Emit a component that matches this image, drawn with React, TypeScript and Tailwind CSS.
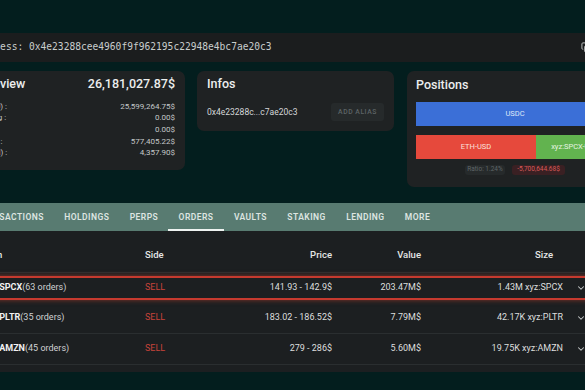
import React from "react";
import { Copy, ChevronDown } from "lucide-react";

const overviewRows = [
  { label: "Spot (U) :", value: "25,599,264.75$" },
  { label: "Lending :", value: "0.00$" },
  { label: "Vault :", value: "0.00$" },
  { label: "Staked :", value: "577,405.22$" },
  { label: "Fee (7d) :", value: "4,357.90$" },
];

const tabs = ["TRANSACTIONS", "HOLDINGS", "PERPS", "ORDERS", "VAULTS", "STAKING", "LENDING", "MORE"];

const orders = [
  { coin: "xyz:SPCX", count: "(63 orders)", side: "SELL", price: "141.93 - 142.9$", value: "203.47M$", size: "1.43M xyz:SPCX", hl: true },
  { coin: "xyz:PLTR", count: "(35 orders)", side: "SELL", price: "183.02 - 186.52$", value: "7.79M$", size: "42.17K xyz:PLTR", hl: false },
  { coin: "xyz:AMZN", count: "(45 orders)", side: "SELL", price: "279 - 286$", value: "5.60M$", size: "19.75K xyz:AMZN", hl: false },
];

function Row({ o }: { o: (typeof orders)[number] }) {
  return (
    <div className="flex items-center h-full pl-[23px] text-[9px]">
      <div className="w-[162px] truncate">
        <span className="font-bold text-[#f2f2f2]">{o.coin}</span>
        <span className="text-[#cfd2d3]">{o.count}</span>
      </div>
      <div className="w-[87px] text-[#c8433a]">{o.side}</div>
      <div className="w-[100px] text-right text-[#dcdede]">{o.price}</div>
      <div className="w-[89px] text-right text-[#dcdede]">{o.value}</div>
      <div className="w-[142px] text-right text-[#dcdede]">{o.size}</div>
      <div className="w-[36px] flex justify-center text-[#c9cccd]">
        <ChevronDown size={10} strokeWidth={2.5} />
      </div>
    </div>
  );
}

export default function App() {
  return (
    <div className="w-[585px] h-[390px] overflow-hidden bg-[#031e1e] font-['Roboto',sans-serif]">
      <div className="-ml-[40px] w-[680px]">
        <div className="h-[33px]" />
        {/* address bar */}
        <div className="h-[29px] bg-[#1b1d1e] flex items-center justify-between pl-[17px] pr-[48px]">
          <span className="font-['DejaVu_Sans_Mono',monospace] text-[9.6px] text-[#c9cdcd]">
            Address: 0x4e23288cee4960f9f962195c22948e4bc7ae20c3
          </span>
          <Copy size={11} className="text-[#c9cdcd]" />
        </div>

        {/* cards */}
        <div className="mt-[9px] flex items-start">
          <div className="w-[225px] h-[99px] rounded-[7px] bg-[#1f2223] pl-[14px] pr-[10px] pt-[5px]">
            <div className="flex justify-between items-center h-[16px] text-[12.5px] font-medium text-[#eceeee]">
              <span>Overview</span>
              <span>26,181,027.87$</span>
            </div>
            <div className="mt-[9px] flex flex-col text-[8px] text-[#c4c8c9]">
              {overviewRows.map((r) => (
                <div key={r.label} className="flex justify-between items-center h-[11.6px]">
                  <span>{r.label}</span>
                  <span>{r.value}</span>
                </div>
              ))}
            </div>
          </div>

          <div className="ml-[12px] w-[197px] h-[60px] rounded-[7px] bg-[#1f2223] px-[10px] pt-[5px]">
            <div className="h-[16px] flex items-center text-[12.5px] font-medium text-[#eceeee]">Infos</div>
            <div className="mt-[11px] flex items-center justify-between">
              <span className="text-[8.5px] text-[#d4d7d8]">0x4e23288c...c7ae20c3</span>
              <span className="h-[18px] w-[53px] flex items-center justify-center rounded-[3px] bg-[#262a2b] text-[6.8px] font-medium tracking-[0.08em] text-[#5d6466]">
                ADD ALIAS
              </span>
            </div>
          </div>

          <div className="ml-[13px] w-[217px] h-[116px] rounded-[7px] bg-[#1f2223] pl-[9px] pr-[10px] pt-[6px]">
            <div className="h-[16px] flex items-center text-[12.5px] font-medium text-[#eceeee]">Positions</div>
            <div className="mt-[9px] h-[24px] bg-[#3b6fd7] flex items-center justify-center text-[7.5px] text-[#dfe7f7]">
              USDC
            </div>
            <div className="mt-[9px] h-[24px] flex text-[7.5px]">
              <div className="w-[120px] bg-[#e6493c] flex items-center justify-center text-[#fbe0dc]">ETH-USD</div>
              <div className="flex-1 bg-[#62b34f] flex items-center justify-center text-[#e5f4e0]">xyz:SPCX-USD</div>
            </div>
            <div className="mt-[6px] flex justify-center gap-[7px] text-[6.5px]">
              <span className="h-[10px] w-[40px] flex items-center justify-center rounded-[3px] bg-[#262a2b] text-[#5f6668]">Ratio: 1.24%</span>
              <span className="h-[10px] w-[53px] flex items-center justify-center rounded-[3px] bg-[#3a2023] text-[#d85a58]">-5,700,644.68$</span>
            </div>
          </div>
        </div>

        {/* tabs */}
        <div className="mt-[16px] h-[28px] bg-[#587b71] flex pl-[5px]">
          {tabs.map((t) => (
            <div
              key={t}
              className={
                "h-full px-[10.2px] flex items-center text-[8.5px] font-semibold tracking-[0.45px] text-[#dde5e1] " +
                (t === "ORDERS" ? "border-b-2 border-[#eef3f1] pt-[2px]" : "")
              }
            >
              {t}
            </div>
          ))}
        </div>

        {/* table */}
        <div className="h-[141px] bg-[#1c1f21]">
          <div className="h-[42px] flex items-end pb-[10px] pl-[23px] text-[9.5px] font-medium text-[#e4e6e6] border-b border-[#2a2e30]">
            <div className="w-[162px]">Coin</div>
            <div className="w-[87px]">Side</div>
            <div className="w-[100px] text-right">Price</div>
            <div className="w-[89px] text-right">Value</div>
            <div className="w-[142px] text-right pr-[10px]">Size</div>
          </div>
          <div className="h-[30px] py-[3px]">
            <div className="h-[24px] border-y-2 border-[#c63a2f] shadow-[0_0_5px_rgba(220,70,50,0.55)]">
              <Row o={orders[0]} />
            </div>
          </div>
          <div className="h-[31px] border-b border-[#2a2e30]">
            <Row o={orders[1]} />
          </div>
          <div className="h-[31px] border-b border-[#2a2e30]">
            <Row o={orders[2]} />
          </div>
        </div>
      </div>
    </div>
  );
}
